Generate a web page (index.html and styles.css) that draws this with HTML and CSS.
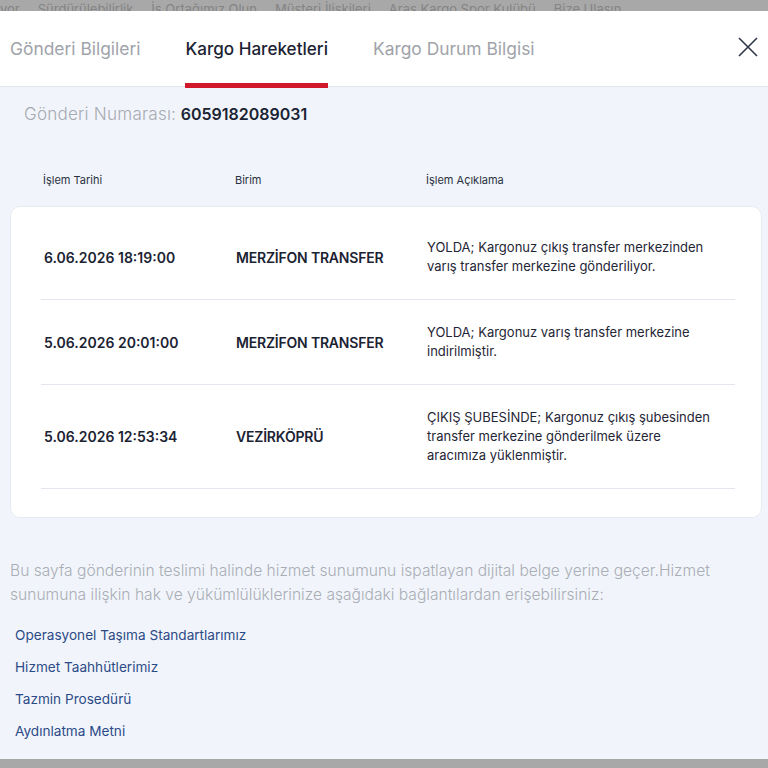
FILE: index.html
```html
<!DOCTYPE html>
<html lang="tr">
<head>
    <meta charset="UTF-8">
    <meta name="viewport" content="width=device-width, initial-scale=1.0">
    <title>Kargo Hareketleri</title>
    <link rel="stylesheet" href="styles.css">
</head>
<body>

<div class="topnav">
    <span>yor</span>
    <span>Sürdürülebilirlik</span>
    <span>İş Ortağımız Olun</span>
    <span>Müşteri İlişkileri</span>
    <span>Aras Kargo Spor Kulübü</span>
    <span>Bize Ulaşın</span>
</div>

<div class="modal">
    <div class="modal-header">
        <div class="tabs">
            <div class="tab">Gönderi Bilgileri</div>
            <div class="tab active">Kargo Hareketleri</div>
            <div class="tab">Kargo Durum Bilgisi</div>
        </div>
        <button class="close" type="button" aria-label="Kapat">
            <svg width="20" height="20" viewBox="0 0 20 20">
                <path d="M1 1 L19 19 M19 1 L1 19" stroke="#2f3647" stroke-width="1.6" fill="none"/>
            </svg>
        </button>
    </div>

    <div class="modal-body">
        <div class="shipment-no">
            <span class="label">Gönderi Numarası:</span>
            <span class="number">6059182089031</span>
        </div>

        <div class="cols cols-head">
            <div>İşlem Tarihi</div>
            <div>Birim</div>
            <div>İşlem Açıklama</div>
        </div>

        <div class="card">
            <div class="cols row">
                <div class="date">6.06.2026 18:19:00</div>
                <div class="unit">MERZİFON TRANSFER</div>
                <div class="desc">YOLDA; Kargonuz çıkış transfer merkezinden varış transfer merkezine gönderiliyor.</div>
            </div>
            <div class="cols row">
                <div class="date">5.06.2026 20:01:00</div>
                <div class="unit">MERZİFON TRANSFER</div>
                <div class="desc">YOLDA; Kargonuz varış transfer merkezine indirilmiştir.</div>
            </div>
            <div class="cols row">
                <div class="date">5.06.2026 12:53:34</div>
                <div class="unit">VEZİRKÖPRÜ</div>
                <div class="desc">ÇIKIŞ ŞUBESİNDE; Kargonuz çıkış şubesinden transfer merkezine gönderilmek üzere aracımıza yüklenmiştir.</div>
            </div>
        </div>

        <p class="note">Bu sayfa gönderinin teslimi halinde hizmet sunumunu ispatlayan dijital belge yerine geçer.Hizmet sunumuna ilişkin hak ve yükümlülüklerinize aşağıdaki bağlantılardan erişebilirsiniz:</p>

        <ul class="links">
            <li><a href="#">Operasyonel Taşıma Standartlarımız</a></li>
            <li><a href="#">Hizmet Taahhütlerimiz</a></li>
            <li><a href="#">Tazmin Prosedürü</a></li>
            <li><a href="#">Aydınlatma Metni</a></li>
        </ul>
    </div>
</div>

<div class="bottom-shade"></div>

</body>
</html>
```

FILE: styles.css
```css
* {
    box-sizing: border-box;
}
body {
    font-family: 'Inter', 'Noto Sans', sans-serif;
    background: #f1f5fb;
    margin: 0;
    padding: 0;
    height: 768px;
    overflow: hidden;
    display: flex;
    flex-direction: column;
}
/* faded site menu behind the overlay */
.topnav {
    height: 11px;
    background: #a8a8a8;
    overflow: hidden;
    display: flex;
    align-items: flex-end;
    gap: 18px;
    white-space: nowrap;
    font-size: 13px;
    line-height: 11px;
    color: #848484;
    flex-shrink: 0;
}
.topnav span {
    margin-bottom: -4px;
}
.modal {
    flex: 1;
    display: flex;
    flex-direction: column;
}
.modal-header {
    height: 76px;
    background: #fff;
    border-bottom: 1px solid #e4e7ed;
    display: flex;
    justify-content: space-between;
    align-items: stretch;
    padding: 0 10px;
}
.tabs {
    display: flex;
    gap: 45px;
}
.tab {
    display: flex;
    align-items: center;
    font-size: 17.4px;
    color: #a0a3aa;
    border-bottom: 5px solid transparent;
    margin-bottom: -1px;
    height: 77px;
    padding-top: 2px;
}
.tab.active {
    color: #1b2333;
    font-weight: 500;
    font-size: 17.1px;
    border-bottom-color: #d1172a;
}
.close {
    background: none;
    border: none;
    padding: 0 0 4px;
    cursor: pointer;
    display: flex;
    align-items: center;
}
.modal-body {
    padding: 17px 6px 0 10px;
}
.shipment-no {
    padding-left: 14px;
    font-size: 16px;
    line-height: 20px;
}
.shipment-no .label {
    color: #a7aab1;
    font-weight: 300;
    font-size: 17.1px;
    letter-spacing: 0.2px;
}
.shipment-no .number {
    color: #1b2333;
    font-weight: 600;
}
.cols {
    display: grid;
    grid-template-columns: 192px 191px 1fr;
}
.cols > div {
    padding-left: 3px;
}
.cols-head {
    margin: 48px 0 0 30px;
    font-size: 11px;
    line-height: 16px;
    color: #2a3142;
    height: 34px;
}
.card {
    background: #fff;
    border: 1px solid #e8ebf1;
    border-radius: 10px;
    padding: 8px 26px 28px 30px;
}
.row {
    align-items: center;
    padding: 23px 0;
    border-bottom: 1px solid #e3e6ec;
}
.date,
.unit {
    font-size: 14px;
    font-weight: 600;
    color: #1b2333;
}
.unit {
    letter-spacing: -0.2px;
}
.desc {
    font-size: 13px;
    line-height: 19px;
    color: #1f2636;
    max-width: 290px;
}
.note {
    margin: 41px 0 0;
    font-size: 15.6px;
    line-height: 24px;
    color: #a9adb5;
    font-weight: 300;
}
.links {
    list-style: none;
    margin: 18px 0 0;
    padding: 0 0 0 5px;
}
.links li {
    height: 32px;
    line-height: 18px;
}
.links a {
    font-size: 13.6px;
    color: #2c4a86;
    text-decoration: none;
}
.links a:hover {
    text-decoration: underline;
}
.bottom-shade {
    height: 9px;
    background: #a8a8a8;
    flex-shrink: 0;
}
```
